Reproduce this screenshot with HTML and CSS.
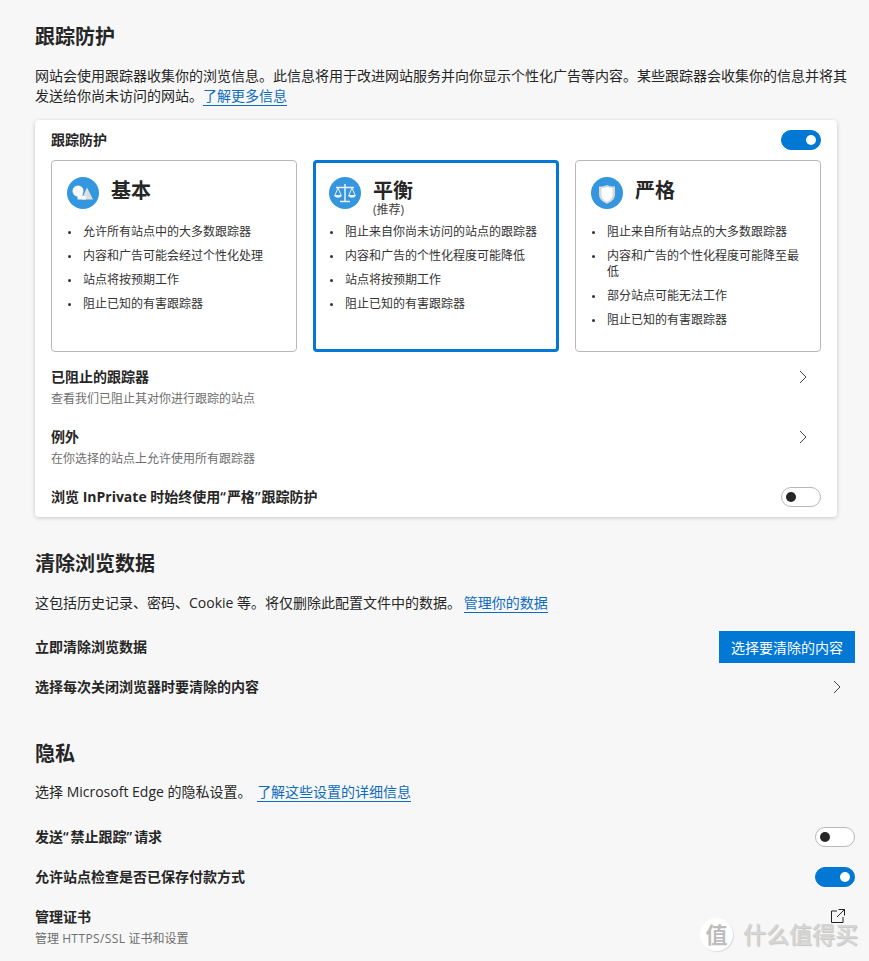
FILE: index.html
```html
<!DOCTYPE html>
<html lang="zh-CN">
<head>
    <meta charset="UTF-8">
    <title>设置 - 隐私</title>
    <link rel="stylesheet" href="styles.css">
</head>
<body>
    <div class="page">
        <section class="tracking">
            <h2 class="section-title">跟踪防护</h2>
            <p class="section-desc">网站会使用跟踪器收集你的浏览信息。此信息将用于改进网站服务并向你显示个性化广告等内容。某些跟踪器会收集你的信息并将其发送给你尚未访问的网站。<a href="#">了解更多信息</a></p>

            <div class="panel">
                <div class="panel-head">
                    <span class="row-title">跟踪防护</span>
                    <span class="switch on"></span>
                </div>

                <div class="levels">
                    <div class="level">
                        <div class="level-head">
                            <span class="level-icon">
                                <svg viewBox="0 0 32 32" width="32" height="32"><circle cx="16" cy="16" r="16" fill="#3596e0"/><path d="M20 10.500 26 22.500H14.500z" fill="#dedede"/><circle cx="11" cy="14" r="5.500" fill="#f7f7f7"/><path d="M10.500 15h5v4h3.500v3.500h-8.500z" fill="#f7f7f7"/></svg>
                            </span>
                            <div class="level-name">基本</div>
                        </div>
                        <ul class="level-list">
                            <li>允许所有站点中的大多数跟踪器</li>
                            <li>内容和广告可能会经过个性化处理</li>
                            <li>站点将按预期工作</li>
                            <li>阻止已知的有害跟踪器</li>
                        </ul>
                    </div>

                    <div class="level selected">
                        <div class="level-head">
                            <span class="level-icon">
                                <svg viewBox="0 0 32 32" width="32" height="32"><circle cx="16" cy="16" r="16" fill="#3596e0"/><g fill="none" stroke="#eee" stroke-width="1.500"><path d="M16 7v17M11 24.500h10M7 10.500h18"/><path d="M9 11 6 18M9 11l3 7M23 11l-3 7M23 11l3 7" stroke-width="1"/></g><path d="M5 18h8c-.3 1.800-2 2.800-4 2.800S5.300 19.800 5 18zM19 18h8c-.3 1.800-2 2.800-4 2.800S19.300 19.800 19 18z" fill="#eee"/></svg>
                            </span>
                            <div>
                                <div class="level-name">平衡</div>
                                <div class="level-note">(推荐)</div>
                            </div>
                        </div>
                        <ul class="level-list">
                            <li>阻止来自你尚未访问的站点的跟踪器</li>
                            <li>内容和广告的个性化程度可能降低</li>
                            <li>站点将按预期工作</li>
                            <li>阻止已知的有害跟踪器</li>
                        </ul>
                    </div>

                    <div class="level">
                        <div class="level-head">
                            <span class="level-icon">
                                <svg viewBox="0 0 32 32" width="32" height="32"><circle cx="16" cy="16" r="16" fill="#3596e0"/><path d="M8 9.500c3 0 5.500-.4 8-1.500 2.500 1.100 5 1.500 8 1.500v8c0 4.500-3.500 7.300-8 9.200-4.500-1.900-8-4.700-8-9.200z" fill="#d9d9d9"/><path d="M10.500 11c2 0 3.800-.3 5.500-1 1.700.7 3.500 1 5.500 1v6.500c0 3.500-2.500 5.700-5.500 7.200-3-1.500-5.500-3.700-5.500-7.200z" fill="#fff"/></svg>
                            </span>
                            <div class="level-name">严格</div>
                        </div>
                        <ul class="level-list">
                            <li>阻止来自所有站点的大多数跟踪器</li>
                            <li>内容和广告的个性化程度可能降至最低</li>
                            <li>部分站点可能无法工作</li>
                            <li>阻止已知的有害跟踪器</li>
                        </ul>
                    </div>
                </div>

                <div class="panel-row tall">
                    <div>
                        <div class="row-title">已阻止的跟踪器</div>
                        <div class="row-sub">查看我们已阻止其对你进行跟踪的站点</div>
                    </div>
                    <svg class="chevron" viewBox="0 0 8 14" width="8" height="14"><path d="M1 1l6 6-6 6" fill="none" stroke="#444" stroke-width="1"/></svg>
                </div>
                <div class="panel-row tall">
                    <div>
                        <div class="row-title">例外</div>
                        <div class="row-sub">在你选择的站点上允许使用所有跟踪器</div>
                    </div>
                    <svg class="chevron" viewBox="0 0 8 14" width="8" height="14"><path d="M1 1l6 6-6 6" fill="none" stroke="#444" stroke-width="1"/></svg>
                </div>
                <div class="panel-row last">
                    <div class="row-title">浏览 <span class="latin">InPrivate</span> 时始终使用<span class="quote">“</span>严格<span class="quote">”</span>跟踪防护</div>
                    <span class="switch"></span>
                </div>
            </div>
        </section>

        <section class="clear-data">
            <h2 class="section-title">清除浏览数据</h2>
            <p class="section-desc">这包括历史记录、密码、Cookie 等。将仅删除此配置文件中的数据。 <a href="#">管理你的数据</a></p>
            <div class="row first">
                <div class="row-title">立即清除浏览数据</div>
                <button class="primary">选择要清除的内容</button>
            </div>
            <div class="row">
                <div class="row-title">选择每次关闭浏览器时要清除的内容</div>
                <svg class="chevron" viewBox="0 0 8 14" width="8" height="14"><path d="M1 1l6 6-6 6" fill="none" stroke="#444" stroke-width="1"/></svg>
            </div>
        </section>

        <section class="privacy">
            <h2 class="section-title">隐私</h2>
            <p class="section-desc">选择 Microsoft Edge 的隐私设置。 <a href="#">了解这些设置的详细信息</a></p>
            <div class="row">
                <div class="row-title">发送<span class="quote">“</span>禁止跟踪<span class="quote">”</span>请求</div>
                <span class="switch"></span>
            </div>
            <div class="row">
                <div class="row-title">允许站点检查是否已保存付款方式</div>
                <span class="switch on"></span>
            </div>
            <div class="row cert">
                <div>
                    <div class="row-title">管理证书</div>
                    <div class="row-sub">管理 <span class="latin-sub">HTTPS/SSL</span> 证书和设置</div>
                </div>
                <svg class="external" viewBox="0 0 14 14" width="14" height="14"><path d="M6 2H.5v11.500H12V8M7.500.500h6v6M13.500.500 6 8" fill="none" stroke="#222" stroke-width="1"/></svg>
            </div>
        </section>
    </div>

    <div class="watermark">
        <span class="watermark-seal">值</span>
        <span class="watermark-text">什么值得买</span>
    </div>
</body>
</html>
```

FILE: styles.css
```css
* {
    margin: 0;
    padding: 0;
    box-sizing: border-box;
}

html, body {
    height: 961px;
    overflow: hidden;
}

body {
    position: relative;
    background: #f7f7f7;
    color: #262626;
    font-family: "Open Sans", "Noto Sans CJK SC", sans-serif;
    font-size: 13px;
}

.page {
    padding: 25px 14px 0 35px;
}

.section-title {
    font-size: 20px;
    line-height: 24px;
    font-weight: 700;
    color: #262626;
}

.section-desc {
    font-size: 14px;
    line-height: 20px;
    margin-top: 17px;
    width: 814px;
}

.section-desc a {
    color: #0f6cbd;
    text-decoration: none;
    border-bottom: 1px solid #0f6cbd;
}

.panel {
    width: 802px;
    margin-top: 14px;
    background: #fff;
    border-radius: 4px;
    box-shadow: 0 1px 4px rgba(0, 0, 0, 0.2);
    padding: 0 16px 5px;
}

.panel-head {
    height: 40px;
    display: flex;
    align-items: center;
    justify-content: space-between;
}

.switch {
    display: block;
    position: relative;
    width: 40px;
    height: 20px;
    border: 1px solid #b8b8b8;
    border-radius: 10px;
    background: #fff;
    flex-shrink: 0;
}

.switch::after {
    content: "";
    position: absolute;
    top: 4px;
    left: 4px;
    width: 10px;
    height: 10px;
    border-radius: 50%;
    background: #262626;
}

.switch.on {
    background: #0078d4;
    border-color: #0078d4;
}

.switch.on::after {
    left: 24px;
    background: #fff;
}

.levels {
    display: grid;
    grid-template-columns: repeat(3, 246px);
    gap: 16px;
    margin-bottom: 10px;
}

.level {
    height: 192px;
    background: #fff;
    border: 1px solid #b8b8b8;
    border-radius: 4px;
    padding: 16px 15px 0;
}

.level.selected {
    border: 3px solid #0078d4;
    padding: 14px 13px 0;
}

.level-head {
    display: flex;
    gap: 12px;
    height: 44px;
}

.level-icon {
    display: block;
    width: 32px;
    height: 32px;
    flex-shrink: 0;
}

.level-name {
    font-size: 20px;
    line-height: 26px;
    padding-top: 1px;
    font-weight: 700;
}

.level-note {
    font-size: 12px;
    line-height: 11px;
    color: #444;
}

.level-list {
    list-style: none;
    margin-top: 3px;
}

.level-list li {
    position: relative;
    padding-left: 16px;
    font-size: 12px;
    line-height: 16px;
    margin-bottom: 8px;
    color: #333;
}

.level-list li::before {
    content: "";
    position: absolute;
    left: 1px;
    top: 7px;
    width: 3px;
    height: 3px;
    border-radius: 50%;
    background: #333;
}

.panel-row {
    display: flex;
    justify-content: space-between;
}

.panel-row.tall {
    height: 60px;
    padding: 5px 14px 0 0;
}

.panel-row.tall .chevron {
    margin-top: 3px;
}

.panel-row.last {
    height: 30px;
    align-items: center;
}

.panel-row .quote {
    letter-spacing: 1px;
}

.row-title {
    font-size: 14px;
    line-height: 20px;
    font-weight: 600;
    color: #262626;
}

.latin {
    font-weight: 700;
}

.latin-sub {
    letter-spacing: 0.4px;
}

.quote {
    letter-spacing: 2px;
}

.row-sub {
    font-size: 12px;
    line-height: 16px;
    margin-top: 4px;
    color: #6e6e6e;
}

.clear-data {
    margin-top: 35px;
}

.clear-data .section-desc a {
    margin-left: -1px;
}

.row {
    display: flex;
    align-items: center;
    justify-content: space-between;
    height: 40px;
}

.clear-data .row.first {
    margin-top: 14px;
}

.clear-data .row .chevron {
    margin-right: 14px;
}

.primary {
    width: 136px;
    height: 32px;
    border: 0;
    background: #0078d4;
    color: #fff;
    font-family: inherit;
    font-size: 14px;
}

.privacy {
    margin-top: 35px;
}

.privacy .section-desc {
    margin-top: 16px;
    margin-bottom: 15px;
}

.privacy .section-desc a {
    margin-left: 2px;
}

.row.cert {
    height: auto;
    margin-top: 10px;
    align-items: flex-start;
}

.external {
    margin: 2px 10px 0 0;
}

.watermark {
    position: absolute;
    right: 11px;
    bottom: 10px;
    display: flex;
    align-items: center;
    gap: 10px;
    color: #d6d6d6;
}

.watermark-seal {
    width: 33px;
    height: 33px;
    border-radius: 50%;
    background: #fff;
    box-shadow: 1px 1px 1px #ddd;
    color: #bdbdbd;
    font-size: 22px;
    font-weight: 700;
    line-height: 33px;
    text-align: center;
}

.watermark-text {
    font-size: 23px;
    line-height: 33px;
    font-weight: 500;
    text-shadow: 1px 1px 1px #c4c4c4;
}
```
